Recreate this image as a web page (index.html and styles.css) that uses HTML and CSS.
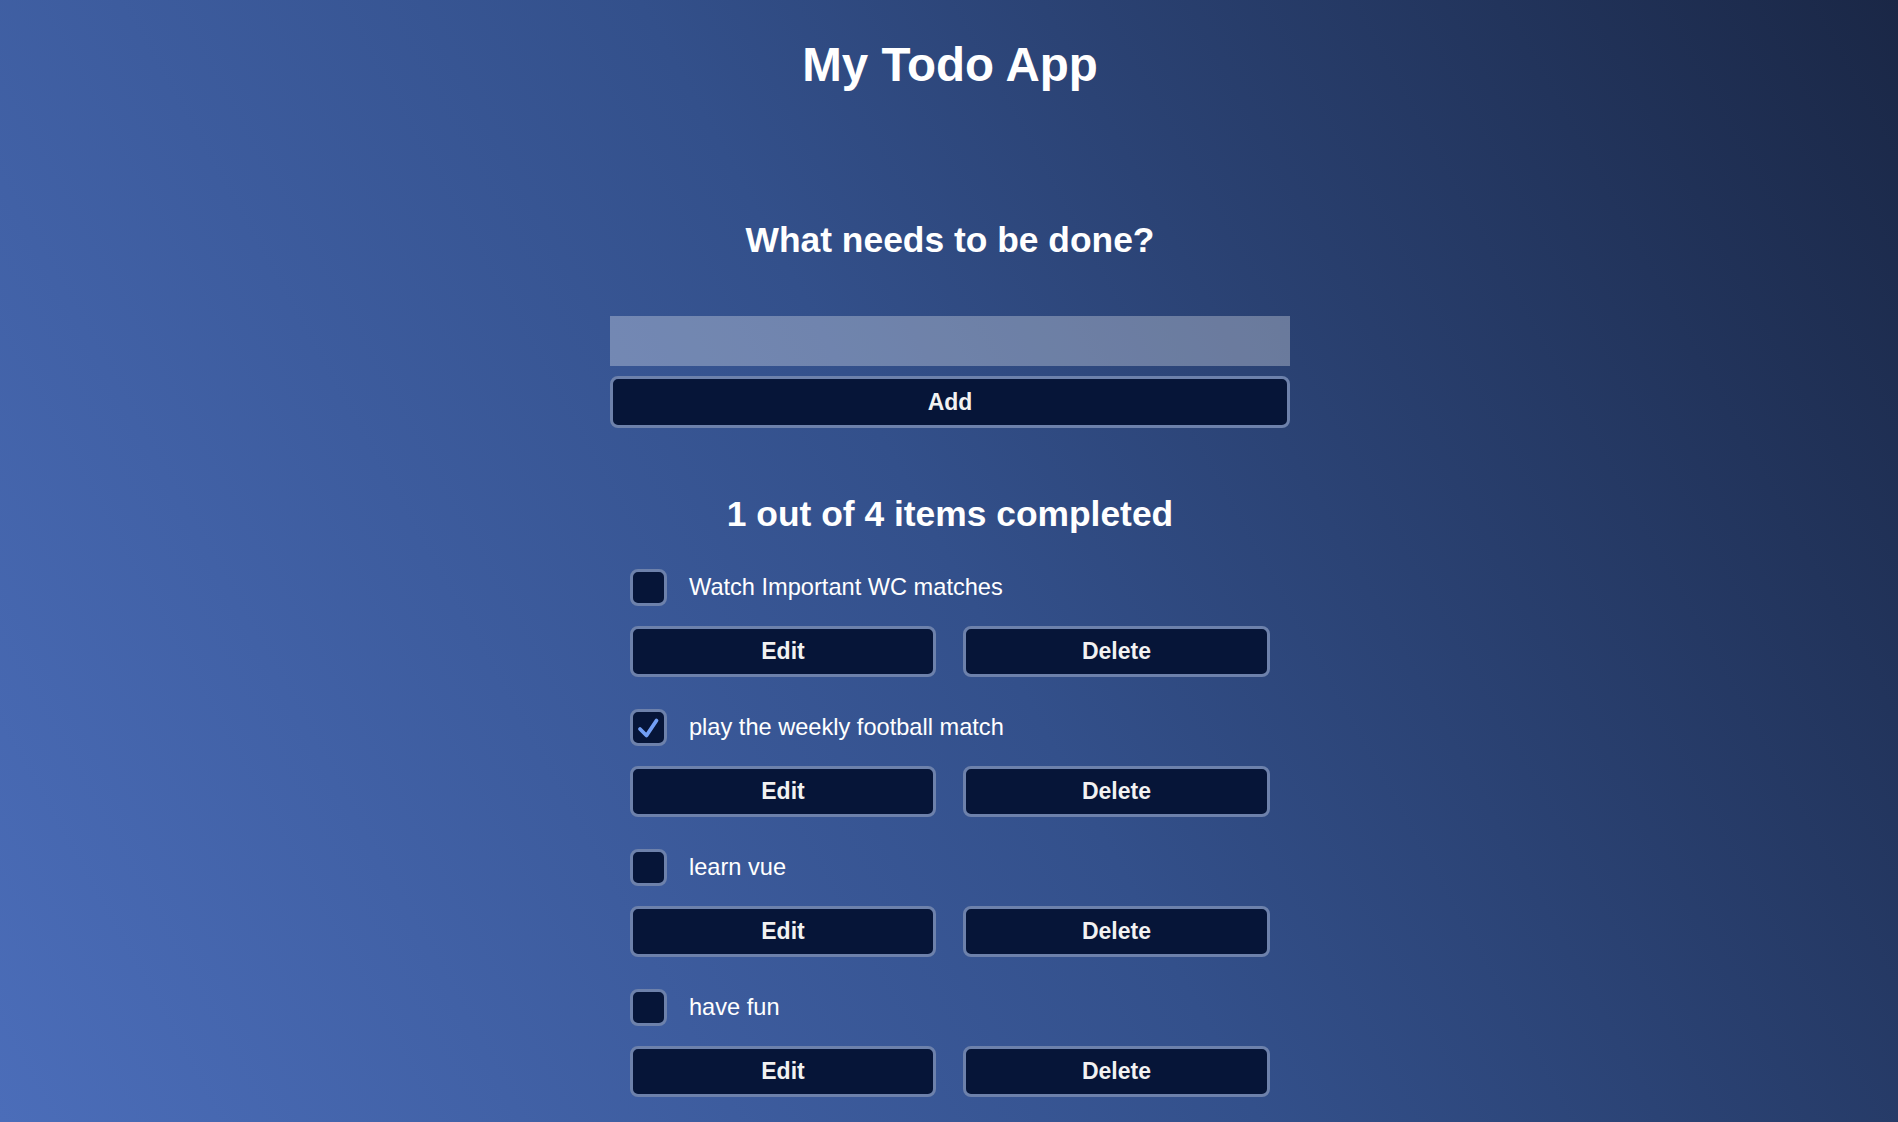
FILE: index.html
```html
<!DOCTYPE html>
<html lang="en">
<head>
<meta charset="utf-8">
<title>My Todo App</title>
<link rel="stylesheet" href="styles.css">
</head>
<body>
<main class="app">
  <h1 class="title">My Todo App</h1>
  <h2 class="prompt">What needs to be done?</h2>
  <form class="add-form">
    <input class="add-input" type="text" aria-label="New todo">
    <button class="btn btn-add" type="button">Add</button>
  </form>
  <h2 class="counter">1 out of 4 items completed</h2>
  <ul class="todo-list">
    <li class="todo">
      <label class="todo-label">
        <span class="box"></span>
        <span class="todo-text">Watch Important WC matches</span>
      </label>
      <div class="actions">
        <button class="btn" type="button">Edit</button>
        <button class="btn" type="button">Delete</button>
      </div>
    </li>
    <li class="todo">
      <label class="todo-label">
        <span class="box">
          <svg class="check" viewBox="0 0 31 31" width="31" height="31" aria-hidden="true"><path d="M7 17 L13.5 23.5 L23.5 8.5" fill="none" stroke="#729ff5" stroke-width="3.8" stroke-linecap="round" stroke-linejoin="round"/></svg>
        </span>
        <span class="todo-text">play the weekly football match</span>
      </label>
      <div class="actions">
        <button class="btn" type="button">Edit</button>
        <button class="btn" type="button">Delete</button>
      </div>
    </li>
    <li class="todo">
      <label class="todo-label">
        <span class="box"></span>
        <span class="todo-text">learn vue</span>
      </label>
      <div class="actions">
        <button class="btn" type="button">Edit</button>
        <button class="btn" type="button">Delete</button>
      </div>
    </li>
    <li class="todo">
      <label class="todo-label">
        <span class="box"></span>
        <span class="todo-text">have fun</span>
      </label>
      <div class="actions">
        <button class="btn" type="button">Edit</button>
        <button class="btn" type="button">Delete</button>
      </div>
    </li>
  </ul>
</main>
</body>
</html>
```
FILE: styles.css
```css
html, body {
  margin: 0;
  padding: 0;
}

body {
  min-height: 100vh;
  background: linear-gradient(61deg, #4b6db9 0%, #33508b 50%, #1a2746 100%);
  background-attachment: fixed;
  color: #ffffff;
  font-family: "Liberation Sans", Arial, sans-serif;
  overflow: hidden;
}

.app {
  display: flex;
  flex-direction: column;
  align-items: center;
  padding-left: 2px;
}

.title {
  margin: 37px 0 0;
  font-size: 47.5px;
  font-weight: bold;
  line-height: normal;
}

.prompt {
  margin: 128px 0 0;
  font-size: 35.4px;
  font-weight: bold;
  line-height: normal;
}

.add-form {
  width: 680px;
  margin-top: 55px;
  display: flex;
  flex-direction: column;
  gap: 10px;
}

.add-input {
  height: 50px;
  box-sizing: border-box;
  border: none;
  padding: 0 12px;
  margin: 0;
  background: rgba(255, 255, 255, 0.3);
  font-family: inherit;
  font-size: 22px;
  color: #ffffff;
  outline: none;
}

.btn {
  box-sizing: border-box;
  height: 52px;
  margin: 0;
  padding: 0;
  border: 3px solid #6d81ab;
  border-radius: 8px;
  background: #061538;
  color: #f2f2f2;
  font-family: inherit;
  font-size: 23px;
  font-weight: bold;
}

.counter {
  margin: 66px 0 0;
  font-size: 35.4px;
  font-weight: bold;
  line-height: normal;
}

.todo-list {
  list-style: none;
  margin: 34px 0 0;
  padding: 0;
  width: 640px;
  display: flex;
  flex-direction: column;
  gap: 32px;
}

.todo {
  display: flex;
  flex-direction: column;
  gap: 20px;
}

.todo-label {
  display: flex;
  align-items: center;
  gap: 22px;
}

.box {
  box-sizing: border-box;
  width: 37px;
  height: 37px;
  border: 3px solid #6d81ab;
  border-radius: 8px;
  background: #061538;
  display: flex;
  align-items: center;
  justify-content: center;
  flex: none;
}

.check {
  display: block;
}

.todo-text {
  font-size: 23.6px;
  color: #ffffff;
}

.actions {
  display: grid;
  grid-template-columns: 306px 307px;
  column-gap: 27px;
}

.actions .btn {
  height: 51px;
}
```
